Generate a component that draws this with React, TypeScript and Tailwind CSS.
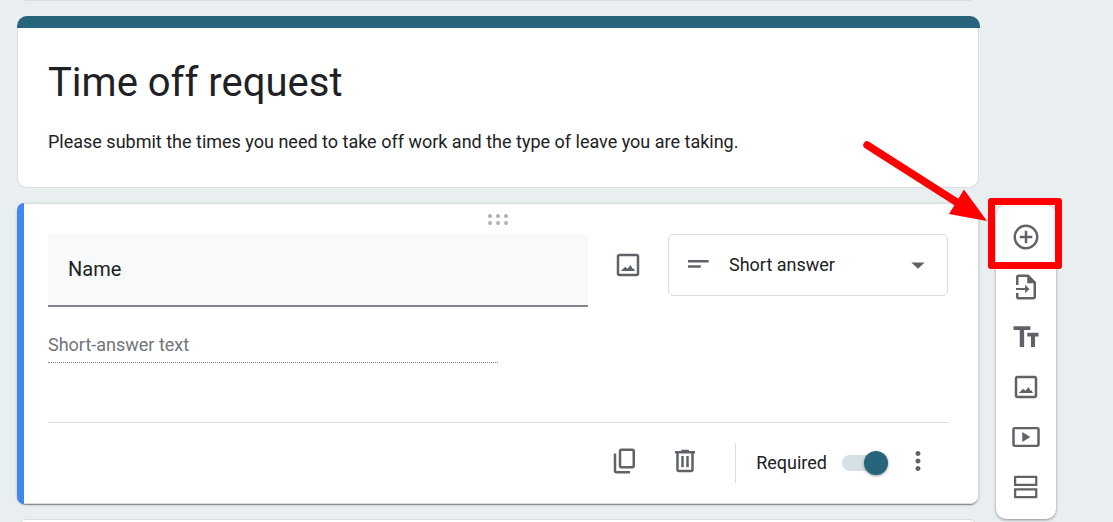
import React, { useState } from 'react';

interface IconProps {
  d: string;
  className?: string;
}

const Icon: React.FC<IconProps> = ({ d, className = '' }) => (
  <svg viewBox="0 0 24 24" className={`w-[30px] h-[30px] shrink-0 fill-[#5f6368] ${className}`} aria-hidden="true">
    <path fillRule="evenodd" d={d} />
  </svg>
);

const ICONS = {
  add: 'M13 7h-2v4H7v2h4v4h2v-4h4v-2h-4V7zm-1-5C6.48 2 2 6.48 2 12s4.48 10 10 10 10-4.48 10-10S17.52 2 12 2zm0 18c-4.41 0-8-3.59-8-8s3.59-8 8-8 8 3.59 8 8-3.59 8-8 8z',
  importFile:
    'M14 2H6c-1.1 0-2 .9-2 2v6.300h2V4h7v5h5v11H6v-3.300H4V20c0 1.100.9 2 2 2h12c1.100 0 2-.9 2-2V8l-6-6zM4 12.700v1.700h7.300V17l3.500-3.450-3.500-3.450v2.600H4z',
  title: 'M2 3.300v3h5V20h3.500V6.300h5v-3H2zM22 8.500h-9v3h3V20h3.200v-8.500H22v-3z',
  image:
    'M19 5v14H5V5h14m0-2H5c-1.100 0-2 .9-2 2v14c0 1.100.9 2 2 2h14c1.100 0 2-.9 2-2V5c0-1.100-.9-2-2-2zM14 12l-2.500 3-1.700-1.700L6.200 16.800h11.400L16.500 14.500l-.8.400L14 12z',
  video: 'M3 4h18c1.100 0 2 .9 2 2v12c0 1.100-.9 2-2 2H3c-1.100 0-2-.9-2-2V6c0-1.100.9-2 2-2zm0 1.800v12.400h18V5.800H3zM9 8l6.500 4L9 16V8z',
  section:
    'M3.400 3h16.700c.6 0 1 .4 1 1v7.100H2.400V4c0-.6.4-1 1-1zm.8 1.800v4.500h15.100V4.800H4.200zM2.400 12.900h18.700V20c0 .6-.4 1-1 1H3.400c-.6 0-1-.4-1-1v-7.100zm1.800 1.800v4.500h15.100v-4.500H4.200z',
  copy: 'M9 18q-.825 0-1.412-.587Q7 16.825 7 16V4q0-.825.588-1.413Q8.175 2 9 2h9q.825 0 1.413.587Q20 3.175 20 4v12q0 .825-.587 1.413Q18.825 18 18 18Zm0-2h9V4H9v12Zm-4 6q-.825 0-1.413-.587Q3 20.825 3 20V6h2v14h11v2Z',
  trash:
    'M7 21q-.825 0-1.412-.587Q5 19.825 5 19V6H4V4h5V3h6v1h5v2h-1v13q0 .825-.587 1.413Q17.825 21 17 21ZM17 6H7v13h10ZM9 17h2V8H9Zm4 0h2V8h-2Z',
  more: 'M12 8c1.100 0 2-.9 2-2s-.9-2-2-2-2 .9-2 2 .9 2 2 2zm0 2c-1.100 0-2 .9-2 2s.9 2 2 2 2-.9 2-2-.9-2-2-2zm0 6c-1.100 0-2 .9-2 2s.9 2 2 2 2-.9 2-2-.9-2-2-2z',
  shortText: 'M4 8h16.500v2H4zM4 12.200h10.200v2H4z',
  arrowDown: 'M6.700 10l5.300 5 5.300-5z',
};

const TOOLS = [
  { label: 'Add question', icon: ICONS.add },
  { label: 'Import questions', icon: ICONS.importFile },
  { label: 'Add title and description', icon: ICONS.title },
  { label: 'Add image', icon: ICONS.image },
  { label: 'Add video', icon: ICONS.video },
  { label: 'Add section', icon: ICONS.section },
];

const FormHeader = () => (
  <section>
    <div className="h-3 -mr-px rounded-t-[10px] bg-[#28647c]" />
    <div className="px-[30px] pt-[30px] pb-[33px] bg-white border border-t-0 border-[#dadce0] rounded-b-[10px]">
      <h1 className="text-[40px] leading-[50px] text-[#202124]">Time off request</h1>
      <p className="mt-[22px] text-[18px] leading-6 text-[#202124]">
        Please submit the times you need to take off work and the type of leave you are taking.
      </p>
    </div>
  </section>
);

const QuestionCard = () => {
  const [question, setQuestion] = useState('Name');
  const [type, setType] = useState('short');
  const [required, setRequired] = useState(true);

  return (
    <section className="flex rounded-[9px] bg-white shadow-[0_2px_1px_-1px_rgba(0,0,0,0.35),0_1px_3px_rgba(0,0,0,0.2)]">
      <div className="w-[7px] shrink-0 rounded-l-[9px] bg-[#4285f4]" />
      <div className="flex-1 min-w-0 pl-6 pr-[30px] border-t border-b border-r border-[#dadce0] rounded-r-[9px]">
        <button type="button" aria-label="Move question" className="flex w-full h-[30px] items-center justify-center cursor-move">
          <svg viewBox="0 0 20 11" className="w-5 h-[11px] fill-[#b0b2b5]" aria-hidden="true">
            {[2, 10, 18].map((x) => (
              <g key={x}>
                <circle cx={x} cy="2" r="2" />
                <circle cx={x} cy="9" r="2" />
              </g>
            ))}
          </svg>
        </button>

        <div className="flex items-start">
          <input
            type="text"
            aria-label="Question"
            value={question}
            onChange={(e) => setQuestion(e.target.value)}
            className="flex-1 min-w-0 h-[73px] px-5 pb-0.5 bg-[#f8f9fa] border-b-2 border-[#80868b] text-[20px] text-[#202124] outline-none"
          />
          <button type="button" aria-label="Add image to question" className="flex w-20 h-[62px] items-center justify-center">
            <Icon d={ICONS.image} />
          </button>
          <div className="grid w-[280px] h-[62px] items-center">
            <select
              aria-label="Question type"
              value={type}
              onChange={(e) => setType(e.target.value)}
              className="col-start-1 row-start-1 w-full h-full pl-[60px] pr-12 pb-0.5 appearance-none rounded-[5px] border border-[#dadce0] bg-white text-[18px] text-[#202124] outline-none"
            >
              <option value="short">Short answer</option>
              <option value="paragraph">Paragraph</option>
            </select>
            <div className="col-start-1 row-start-1 flex justify-between px-[15px] pointer-events-none">
              <Icon d={ICONS.shortText} />
              <Icon d={ICONS.arrowDown} />
            </div>
          </div>
        </div>

        <div className="w-1/2 mt-[26px] pb-[5px] border-b border-dotted border-[#80868b]">
          <p className="text-[18px] leading-6 text-[#70757a]">Short-answer text</p>
        </div>

        <div className="flex items-center justify-end h-[81px] mt-[59px] border-t border-[#dadce0]">
          <button type="button" aria-label="Duplicate" className="flex w-[60px] h-10 mb-1 items-center justify-center">
            <Icon d={ICONS.copy} />
          </button>
          <button type="button" aria-label="Delete" className="flex w-[60px] h-10 mb-1 items-center justify-center">
            <Icon d={ICONS.trash} />
          </button>
          <div className="w-px h-10 mx-5 bg-[#dadce0]" />
          <label htmlFor="required" className="mr-[15px] text-[18px] leading-6 text-[#202124]">
            Required
          </label>
          <input
            id="required"
            type="checkbox"
            role="switch"
            checked={required}
            onChange={(e) => setRequired(e.target.checked)}
            className="flex w-[46px] h-4 items-center appearance-none rounded-full bg-[#d4e0e5] before:block before:w-6 before:h-6 before:rounded-full before:bg-[#80868b] before:shadow-[0_1px_3px_rgba(0,0,0,0.4)] checked:before:ml-auto checked:before:bg-[#28647c]"
          />
          <button type="button" aria-label="More options" className="flex w-[60px] h-10 mb-1 items-center justify-center">
            <Icon d={ICONS.more} />
          </button>
        </div>
      </div>
    </section>
  );
};

const Toolbar = () => (
  <aside className="relative w-[60px] shrink-0 mt-[205px] self-start">
    <nav
      aria-label="Form tools"
      className="flex flex-col py-[7px] rounded-[10px] bg-white shadow-[0_1px_3px_rgba(0,0,0,0.4)]"
    >
      {TOOLS.map((tool) => (
        <button key={tool.label} type="button" aria-label={tool.label} className="flex h-[50px] items-center justify-center">
          <Icon d={tool.icon} />
        </button>
      ))}
    </nav>

    {/* Callout pointing at the add button */}
    <div className="absolute -top-[7px] -left-2 w-[74px] h-[71px] rounded-[3px] border-[7px] border-[#ff0000] pointer-events-none" />
    <svg
      viewBox="0 0 126 84"
      className="absolute right-full mr-2 -top-[66px] w-[126px] h-[84px] pointer-events-none"
      aria-hidden="true"
    >
      <path d="M5 6L96 64" stroke="#ff0000" strokeWidth="7.500" strokeLinecap="round" />
      <path d="M125 82L102 50.500L87 75z" fill="#ff0000" />
    </svg>
  </aside>
);

export default function App() {
  return (
    <div className="flex h-screen overflow-hidden gap-[17px] pl-[17px] pr-[57px] bg-[#e9eef1] font-[Roboto,sans-serif]">
      <main className="flex flex-col flex-1 min-w-0 gap-[15px]">
        <div className="h-px shrink-0 mx-2 bg-[#dadce0]" />
        <FormHeader />
        <QuestionCard />
        <div className="h-20 shrink-0 rounded-[10px] border border-[#dadce0] bg-white" />
      </main>
      <Toolbar />
    </div>
  );
}
